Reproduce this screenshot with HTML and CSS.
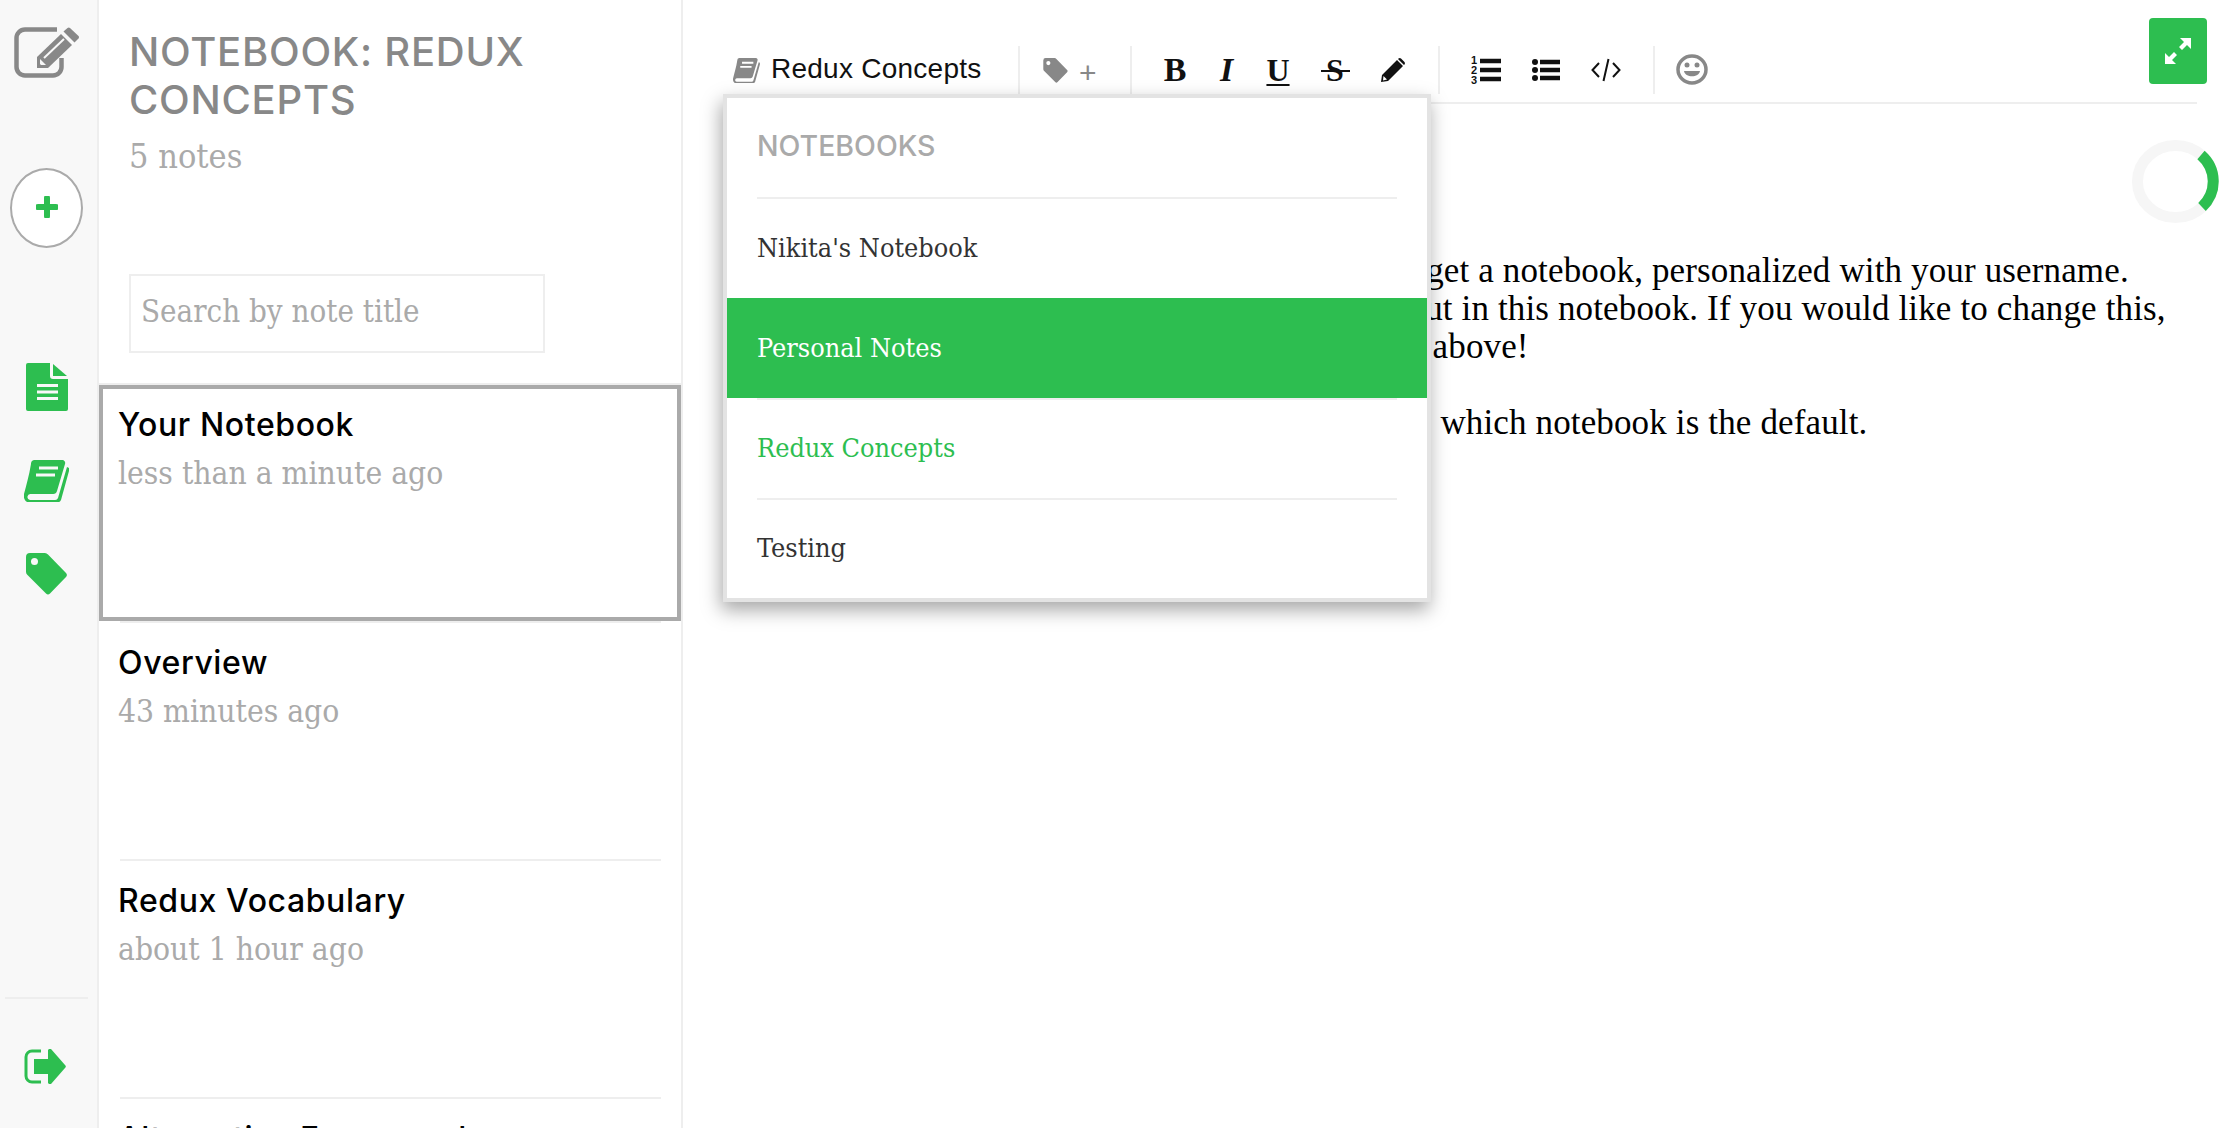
FILE: index.html
```html
<!DOCTYPE html>
<html lang="en">
<head>
    <meta charset="UTF-8">
    <title>Notes</title>
    <link rel="stylesheet" href="styles.css">
</head>
<body>
    <div class="app">
        <aside class="sidebar">
            <svg class="icon-edit" viewBox="0 0 65 51">
                <path d="M43 2.500H11a8.500 8.500 0 0 0-8.500 8.500V40a8.500 8.500 0 0 0 8.500 8.500h28a8.500 8.500 0 0 0 8.500-8.500V31" fill="none" stroke="#888" stroke-width="4.500"/>
                <path d="M23 41V30L47 7l11 11-24 23z" fill="#888"/>
                <path d="M49.500 4.500l4-3.500a2 2 0 0 1 2.500 0l8.500 8a2 2 0 0 1 0 2.500l-4 4z" fill="#888"/>
                <path d="M30 31l20-19" stroke="#f8f8f8" stroke-width="2"/>
                <path d="M26 32l6 6-5 0-1-1z" fill="#f8f8f8"/>
            </svg>
            <button class="add-btn">
                <svg width="22" height="22" viewBox="0 0 22 22"><path d="M11 2v18M2 11h18" stroke="#2dbe50" stroke-width="6" stroke-linecap="round"/></svg>
            </button>
            <svg class="icon-notes" viewBox="0 0 42 48">
                <path d="M2 0h22v13a3 3 0 0 0 3 3h15v30a2 2 0 0 1-2 2H2a2 2 0 0 1-2-2V2a2 2 0 0 1 2-2z" fill="#2dbe50"/>
                <path d="M27 1l14 12H27z" fill="#2dbe50"/>
                <path d="M11 22.500h21M11 29h21M11 35.500h21" stroke="#f8f8f8" stroke-width="3"/>
            </svg>
            <svg class="icon-book" viewBox="0 0 45 42">
                <path d="M10 0h28a3 3 0 0 1 3 4l-8 27a4 4 0 0 1-4 3H7a3 3 0 0 0-1 6h25a3 3 0 0 0 3-2l9-31 2 1v3l-8 29a6 6 0 0 1-5 3H7c-5 0-8-4-7-9 2-8 5-18 7-30a4 4 0 0 1 3-4z" fill="#2dbe50"/>
                <path d="M15 8h19M12 15h19" stroke="#f8f8f8" stroke-width="3"/>
            </svg>
            <svg class="icon-tag" viewBox="0 0 41 42">
                <path fill-rule="evenodd" d="M4 0h14a5 5 0 0 1 4 1.500L40 20a3 3 0 0 1 0 4L24 40.500a3 3 0 0 1-4 0L1.500 22A5 5 0 0 1 0 18V4a4 4 0 0 1 4-4zm4.500 5a3.500 3.500 0 1 0 0 7 3.500 3.500 0 0 0 0-7z" fill="#2dbe50"/>
            </svg>
            <div class="sidebar-line"></div>
            <svg class="icon-signout" viewBox="0 0 42 35">
                <path d="M17 2H8a6 6 0 0 0-6 6v19a6 6 0 0 0 6 6h9" fill="none" stroke="#2dbe50" stroke-width="3"/>
                <path d="M10 10h14V1l1-1h2l14 16a2 2 0 0 1 0 3L27 35h-2l-1-1v-9H10z" fill="#2dbe50"/>
            </svg>
        </aside>

        <section class="notes-col">
            <h1 class="notes-title">NOTEBOOK: REDUX CONCEPTS</h1>
            <p class="notes-count">5 notes</p>
            <input class="notes-search" type="text" placeholder="Search by note title">
            <div class="notes-list">
                <div class="note note-selected">
                    <div class="note-name">Your Notebook</div>
                    <div class="note-time">less than a minute ago</div>
                </div>
                <div class="note-line"></div>
                <div class="note">
                    <div class="note-name">Overview</div>
                    <div class="note-time">43 minutes ago</div>
                </div>
                <div class="note-line"></div>
                <div class="note">
                    <div class="note-name">Redux Vocabulary</div>
                    <div class="note-time">about 1 hour ago</div>
                </div>
                <div class="note-line"></div>
                <div class="note">
                    <div class="note-name">Alternative Frameworks</div>
                    <div class="note-time">2 hours ago</div>
                </div>
            </div>
        </section>

        <main class="editor">
            <a class="expand-btn">
                <svg width="26" height="26" viewBox="0 0 26 26">
                    <path d="M15 0h11v11l-4-4-5 5-3-3 5-5zM0 15l4 4 5-5 3 3-5 5 4 4H0z" fill="#fff"/>
                </svg>
            </a>
            <div class="toolbar">
                <div class="tool-group group-notebook">
                    <svg class="tool-book" viewBox="0 0 45 42">
                        <path d="M10 0h28a3 3 0 0 1 3 4l-8 27a4 4 0 0 1-4 3H7a3 3 0 0 0-1 6h25a3 3 0 0 0 3-2l9-31 2 1v3l-8 29a6 6 0 0 1-5 3H7c-5 0-8-4-7-9 2-8 5-18 7-30a4 4 0 0 1 3-4z" fill="#888"/>
                        <path d="M15 8h19M12 15h19" stroke="#fff" stroke-width="3"/>
                    </svg>
                    <span class="tool-notebook-name">Redux Concepts</span>
                </div>
                <div class="tool-group group-tags">
                    <svg class="tool-tag" viewBox="0 0 41 42">
                        <path fill-rule="evenodd" d="M4 0h14a5 5 0 0 1 4 1.500L40 20a3 3 0 0 1 0 4L24 40.500a3 3 0 0 1-4 0L1.500 22A5 5 0 0 1 0 18V4a4 4 0 0 1 4-4zm4.500 5a3.500 3.500 0 1 0 0 7 3.500 3.500 0 0 0 0-7z" fill="#888"/>
                    </svg>
                    <span class="tool-plus">+</span>
                </div>
                <div class="tool-group group-format">
                    <span class="tool-btn fmt-b">B</span>
                    <span class="tool-btn fmt-i">I</span>
                    <span class="tool-btn fmt-u">U</span>
                    <span class="tool-btn fmt-s">S</span>
                    <span class="tool-btn fmt-pen">
                        <svg width="26" height="26" viewBox="0 0 26 26">
                            <path d="M1 25l1-7L17 3l6 6L8 24zM18.500 1.500a2 2 0 0 1 2.500 0l3.500 3.500a2 2 0 0 1 0 2.500L24 8l-6-6z" fill="#111"/>
                            <path d="M3.500 19l3.500 3.500-4 1z" fill="#fff"/>
                        </svg>
                    </span>
                </div>
                <div class="tool-group group-lists">
                    <span class="tool-btn tool-wide">
                        <svg width="30" height="30" viewBox="0 0 30 30">
                            <path d="M9 6h21M9 15h21M9 24h21" stroke="#111" stroke-width="4.500"/>
                            <text class="ol-num" x="0" y="9">1</text>
                            <text class="ol-num" x="0" y="19">2</text>
                            <text class="ol-num" x="0" y="29">3</text>
                        </svg>
                    </span>
                    <span class="tool-btn tool-wide">
                        <svg width="28" height="24" viewBox="0 0 28 24">
                            <path d="M8 4h20M8 12h20M8 20h20" stroke="#111" stroke-width="4.500"/>
                            <circle cx="3" cy="4" r="3" fill="#111"/>
                            <circle cx="3" cy="12" r="3" fill="#111"/>
                            <circle cx="3" cy="20" r="3" fill="#111"/>
                        </svg>
                    </span>
                    <span class="tool-btn tool-wide">
                        <svg width="30" height="24" viewBox="0 0 30 24">
                            <path d="M8 5L1.500 12 8 19M22 5l6.500 7-6.500 7M17.500 1l-5 22" fill="none" stroke="#111" stroke-width="2"/>
                        </svg>
                    </span>
                </div>
                <div class="tool-group group-emoji">
                    <svg width="32" height="31" viewBox="0 0 32 31">
                        <ellipse cx="16" cy="15.500" rx="14" ry="13.500" fill="none" stroke="#888" stroke-width="3.500"/>
                        <circle cx="11" cy="11" r="2.500" fill="#888"/>
                        <circle cx="21" cy="11" r="2.500" fill="#888"/>
                        <path d="M8 17c1 7 15 7 16 0z" fill="#888"/>
                    </svg>
                </div>
            </div>

            <div class="note-body">
                When you sign up for a new login you will also get a notebook, personalized with your username.<br>
                All your notes you create from now on will be put in this notebook. If you would like to change this,<br>
                You can use the notebook selector in the toolbar above!<br>
                <br>
                You can always visit your setting page to choose which notebook is the default.
            </div>

            <svg class="sync-ring" viewBox="0 0 87 83">
                <ellipse cx="43.500" cy="41.500" rx="38" ry="36" fill="none" stroke="#f6f6f6" stroke-width="11"/>
                <path d="M69 15 A38 36 0 0 1 70 67" fill="none" stroke="#2dbe50" stroke-width="11"/>
            </svg>

            <div class="notebook-menu">
                <div class="menu-head">NOTEBOOKS</div>
                <div class="menu-row">Nikita's Notebook</div>
                <div class="menu-row menu-hover">Personal Notes</div>
                <div class="menu-line"></div>
                <div class="menu-row menu-current">Redux Concepts</div>
                <div class="menu-line"></div>
                <div class="menu-row">Testing</div>
            </div>
        </main>
    </div>
</body>
</html>
```

FILE: styles.css
```css
* { box-sizing: border-box; }
html, body { margin: 0; padding: 0; height: 100%; overflow: hidden; background: #fff; }
.app { display: flex; height: 1128px; font-family: "DejaVu Serif Condensed", "DejaVu Serif", serif; }

/* left icon rail */
.sidebar { width: 99px; flex: none; padding-right: 4px; background: #f8f8f8; border-right: 2px solid #eee; display: flex; flex-direction: column; align-items: center; }
.icon-edit { width: 65px; height: 51px; margin-top: 27px; flex: none; }
.add-btn { width: 73px; height: 80px; margin-top: 90px; padding: 0 0 2px; flex: none; background: #fff; border: 2px solid #aaa; border-radius: 50%; display: flex; align-items: center; justify-content: center; }
.icon-notes { width: 42px; height: 48px; margin-top: 115px; flex: none; }
.icon-book { width: 45px; height: 42px; margin-top: 49px; flex: none; }
.icon-tag { width: 41px; height: 42px; margin-top: 51px; flex: none; }
.sidebar-line { width: 83px; height: 2px; margin-top: 402px; flex: none; background: #eee; }
.icon-signout { width: 42px; height: 35px; margin: 50px 4px 0 0; flex: none; }

/* notes list */
.notes-col { width: 584px; flex: none; border-right: 2px solid #eee; overflow: hidden; }
.notes-title { margin: 28px 0 0 30px; width: 510px; font-family: Inter, sans-serif; font-size: 40px; line-height: 48px; font-weight: 500; letter-spacing: 0.75px; color: #888; }
.notes-count { margin: 12px 0 0 30px; font-size: 34px; line-height: 40px; color: #aaa; }
.notes-search { display: block; width: 416px; height: 79px; margin: 98px 0 0 30px; padding: 0 0 6px 10px; border: 2px solid #eee; font-family: inherit; font-size: 31px; background: #fff; outline: none; }
.notes-search::placeholder { color: #aaa; opacity: 1; }
.notes-list { margin-top: 30px; border-top: 2px solid #eee; }
.note { height: 236px; border: 4px solid transparent; padding: 16px 15px 0; }
.note-selected { border-color: #aaa; }
.note-line { height: 2px; margin: 0 20px 0 21px; background: #eee; }
.note-name { font-family: Inter, sans-serif; font-size: 32px; line-height: 40px; font-weight: 500; letter-spacing: 0.6px; color: #000; }
.note-time { margin-top: 8px; font-size: 31.500px; line-height: 40px; color: #aaa; }

/* editor */
.editor { position: relative; flex: 1; padding: 46px 38px 0 41px; overflow: hidden; }
.expand-btn { position: absolute; top: 18px; right: 28px; width: 58px; height: 66px; background: #2dbe50; border-radius: 4px; display: flex; align-items: center; justify-content: center; }
.toolbar { display: flex; height: 58px; padding-bottom: 8px; border-bottom: 2px solid #eee; }
.tool-group { display: flex; align-items: center; height: 48px; border-right: 2px solid #eee; }
.group-notebook { width: 296px; padding-left: 9px; }
.tool-book { width: 27px; height: 25px; }
.tool-notebook-name { margin: -2px 0 0 11px; font-family: "Liberation Sans", Arial, sans-serif; font-size: 28px; letter-spacing: 0.25px; color: #111; }
.group-tags { width: 112px; padding-left: 23px; }
.tool-tag { width: 25px; height: 25px; }
.tool-plus { margin-left: 11px; padding-top: 6px; font-family: "Liberation Sans", Arial, sans-serif; font-size: 30px; color: #888; }
.group-format { width: 308px; padding-left: 17px; }
.tool-btn { display: flex; justify-content: center; align-items: center; height: 48px; color: #111; font-family: "Liberation Serif", serif; font-size: 34px; }
.fmt-b { width: 52px; font-weight: 700; }
.fmt-i { width: 51px; font-weight: 700; font-style: italic; }
.fmt-u { width: 52px; font-weight: 700; font-size: 32px; text-decoration: underline; text-decoration-thickness: 2px; text-underline-offset: 3px; }
.fmt-s { width: 62px; position: relative; font-weight: 700; font-size: 32px; }
.fmt-s::after { content: ""; position: absolute; left: 17px; top: 24px; width: 29px; height: 2px; background: #111; }
.fmt-pen { width: 54px; }
.group-lists { width: 215px; padding-left: 16px; }
.tool-wide { width: 60px; }
.ol-num { font-family: "Liberation Sans", Arial, sans-serif; font-size: 11px; font-weight: 700; fill: #111; }
.group-emoji { border-right: none; padding: 0 0 2px 21px; }

.note-body { margin-top: 148px; padding-left: 20px; white-space: nowrap; font-family: "Liberation Serif", serif; font-size: 35px; line-height: 38px; letter-spacing: 0.14px; color: #000; }

/* things that lie over the editor */
.sync-ring { position: absolute; top: 140px; right: 16px; width: 87px; height: 83px; }
.notebook-menu { position: absolute; top: 94px; left: 40px; width: 708px; height: 508px; background: #fff; border: 4px solid #e3e3e3; box-shadow: -2px 8px 18px rgba(0, 0, 0, 0.35); }
.menu-head { height: 101px; margin: 0 30px; padding-top: 28px; border-bottom: 2px solid #eee; font-family: Inter, sans-serif; font-size: 28.500px; line-height: 40px; font-weight: 500; color: #aaa; }
.menu-row { height: 98px; padding: 0 30px 3px; display: flex; align-items: center; font-size: 26.800px; color: #333; }
.menu-row:nth-child(2) { height: 99px; padding-bottom: 2px; }
.menu-hover { height: 100px; padding-bottom: 2px; background: #2dbe50; color: #fff; }
.menu-current { color: #2dbe50; }
.menu-line { height: 2px; margin: 0 30px; background: #eee; }
```
